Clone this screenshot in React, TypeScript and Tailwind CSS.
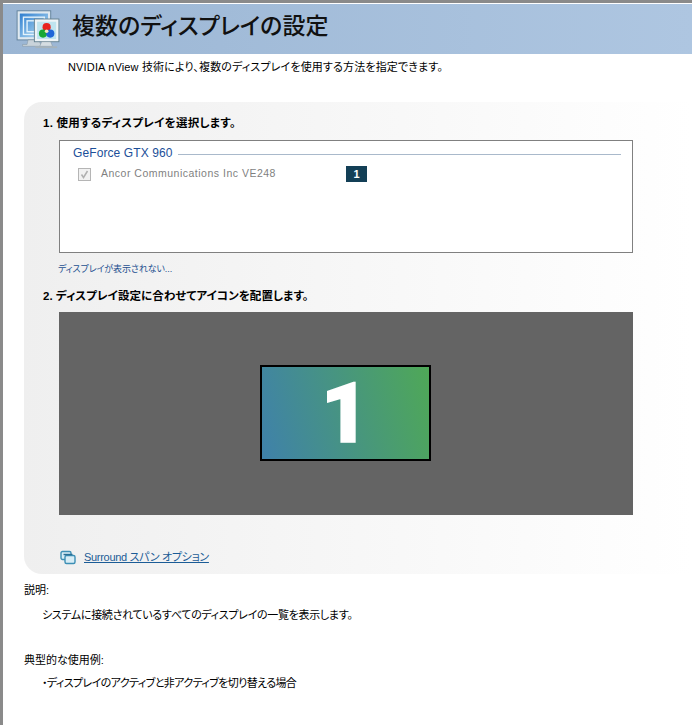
import React from 'react';

const jp = { fontFamily: '"Liberation Sans", "Noto Sans CJK JP", sans-serif' };

const HeaderIcon = () => (
  <svg width="46" height="40" viewBox="0 0 50 44">
    <defs>
      <linearGradient id="scr" x1="0" y1="0" x2="1" y2="1">
        <stop offset="0" stopColor="#2f7fd0" />
        <stop offset="1" stopColor="#bfe3f5" />
      </linearGradient>
    </defs>
    <rect x="2" y="2" width="37" height="32" fill="#dfe9f0" stroke="#5f7f99" />
    <rect x="5" y="5" width="31" height="26" fill="url(#scr)" />
    <rect x="9" y="9" width="23" height="19" fill="none" stroke="#e4f3fb" strokeWidth="1.5" />
    <rect x="13" y="13" width="15" height="12" fill="none" stroke="#e4f3fb" strokeWidth="1.5" />
    <path d="M14 34h12l2 5h5v2H8v-2h5z" fill="#c9d3da" stroke="#7d8f9c" strokeWidth=".5" />
    <rect x="21" y="11" width="27" height="25" fill="#eef4f7" stroke="#64808f" />
    <rect x="24" y="14" width="21" height="19" fill="#bfe4ef" />
    <path d="M29 36h10l2 5H27z" fill="#d5dde2" stroke="#7d8f9c" strokeWidth=".5" />
    <rect x="22" y="41" width="24" height="2" fill="#a6b3bb" />
    <circle cx="34.5" cy="20" r="4.5" fill="#e8221e" />
    <circle cx="30.5" cy="27" r="4.5" fill="#18a835" />
    <circle cx="38.5" cy="27" r="4.5" fill="#1f66d8" />
    <circle cx="34.5" cy="24.5" r="2" fill="#f4e9c0" />
  </svg>
);

const SurroundIcon = () => (
  <svg width="16" height="15" viewBox="0 0 16 15" fill="none" stroke="#3d8fb5" strokeWidth="1.4">
    <rect x="1" y="1.5" width="10" height="8" rx="1.5" fill="#d7edf6" />
    <rect x="5" y="5.5" width="10" height="8" rx="1.5" fill="#d7edf6" />
    <path d="M3.5 4.5h9" stroke="#2b6f94" />
  </svg>
);

export default function App() {
  return (
    <div
      className="w-[692px] h-[725px] overflow-hidden bg-white text-black text-[11px] [font-feature-settings:'palt'] border-t-[3px] border-l-[3px] border-[#8a8a8a] pt-px"
      style={jp}
    >
      <header className="h-[50px] flex items-center pl-[12px] bg-gradient-to-r from-[#9bb6d4] to-[#aec6e1]">
        <HeaderIcon />
        <h1 className="ml-[11px] text-[23px] leading-none font-medium text-[#111] mb-[6px] whitespace-nowrap">複数のディスプレイの設定</h1>
      </header>

      <p className="ml-[65px] mt-[6px] h-[15px] leading-[15px] whitespace-nowrap tracking-[0.15px]">
        NVIDIA nView 技術により、複数のディスプレイを使用する方法を指定できます。
      </p>

      <section className="ml-[21px] mt-[27px] h-[472px] rounded-l-[18px] bg-gradient-to-r from-[#efefef] to-[#ffffff] pl-[19px] pt-[14px]">
        <h2 className="h-[15px] leading-[15px] text-[11.5px] tracking-[0.25px] font-bold whitespace-nowrap">1. 使用するディスプレイを選択します。</h2>

        <div className="ml-[16px] mt-[9px] w-[574px] h-[113px] bg-white border border-[#808080] pt-[5px] pl-[13px] pr-[11px]">
          <div className="flex items-center gap-[5px]">
            <span className="text-[12px] leading-[15px] text-[#1c4f99] tracking-[0.1px] whitespace-nowrap">GeForce GTX 960</span>
            <div className="flex-1 h-px bg-[#a9b9cb] mt-px" />
          </div>
          <div className="flex items-center mt-[5px] ml-[5px] h-[16px]">
            <span className="w-[13px] h-[13px] border border-[#b5b5b5] bg-[#f1f1f1] flex items-center justify-center">
              <svg width="9" height="9" viewBox="0 0 9 9" fill="none" stroke="#b0b0b0" strokeWidth="1.5">
                <path d="M1.5 4.5l2 3 4-6.5" />
              </svg>
            </span>
            <span className="ml-[10px] w-[245px] text-[#7f7f7f] text-[10.5px] tracking-[0.5px] whitespace-nowrap">Ancor Communications Inc VE248</span>
            <span className="w-[21px] h-[16px] bg-[#133f56] text-white font-bold text-[11px] flex items-center justify-center">1</span>
          </div>
        </div>

        <a className="block ml-[15px] mt-[9px] h-[14px] leading-[14px] text-[9px] tracking-[-0.1px] text-[#1c4f8f] whitespace-nowrap">ディスプレイが表示されない...</a>

        <h2 className="mt-[13px] h-[15px] leading-[15px] text-[11.5px] tracking-[0.05px] font-bold whitespace-nowrap">2. ディスプレイ設定に合わせてアイコンを配置します。</h2>

        <div className="ml-[16px] mt-[8px] w-[574px] h-[203px] pr-[2px] pb-[2px] bg-[#646464] flex items-center justify-center">
          <div className="w-[171px] h-[96px] border-2 border-black bg-[linear-gradient(75deg,#3f81aa,#4fa857)] flex items-center justify-center">
            <span className="text-white font-black text-[83px] leading-none mt-[2px] [-webkit-text-stroke:1.5px_white]" style={{ fontFamily: 'Roboto, sans-serif' }}>1</span>
          </div>
        </div>

        <div className="flex items-center ml-[17px] mt-[34px] h-[16px]">
          <SurroundIcon />
          <a className="ml-[8px] text-[#1b5c96] underline whitespace-nowrap tracking-[-0.3px]">Surround スパン オプション</a>
        </div>
      </section>

      <div className="ml-[21px] mt-[9px] h-[15px] leading-[15px]">説明:</div>
      <p className="ml-[39px] mt-[10px] h-[15px] leading-[15px] whitespace-nowrap tracking-[-0.3px]">システムに接続されているすべてのディスプレイの一覧を表示します。</p>
      <div className="ml-[21px] mt-[30px] h-[15px] leading-[15px]">典型的な使用例:</div>
      <p className="ml-[39px] mt-[8px] h-[15px] leading-[15px] whitespace-nowrap tracking-[-0.6px]">・ディスプレイのアクティブと非アクティブを切り替える場合</p>
    </div>
  );
}
